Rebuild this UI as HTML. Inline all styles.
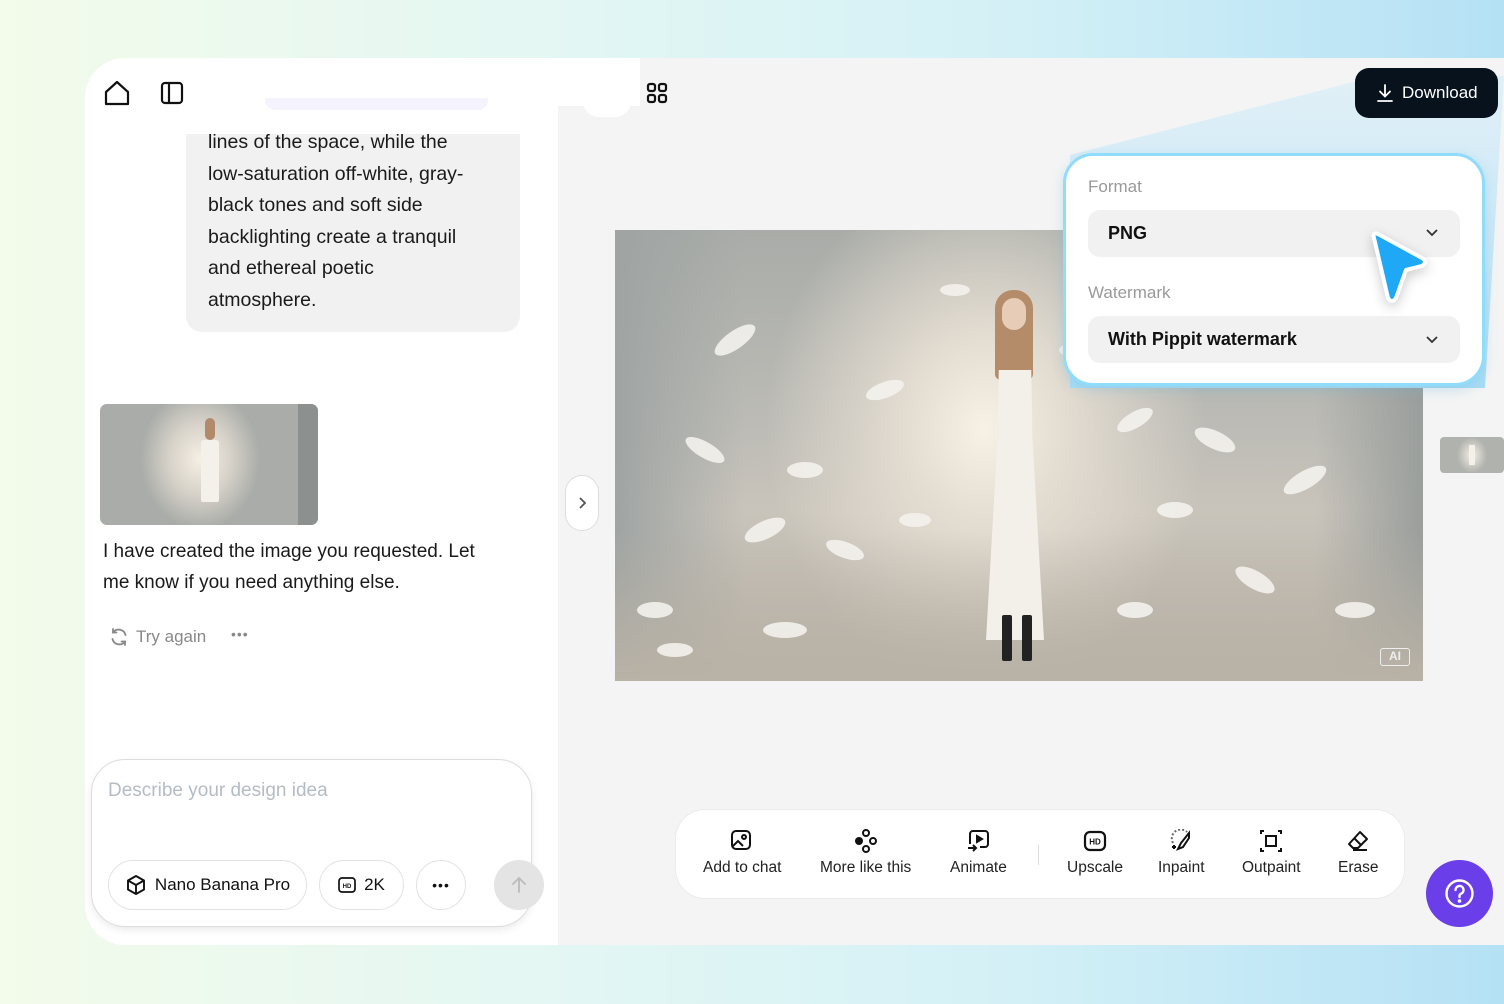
<!DOCTYPE html>
<html><head><meta charset="utf-8"><style>
*{box-sizing:border-box;margin:0;padding:0}
body{width:1504px;height:1004px;overflow:hidden;font-family:"Liberation Sans",sans-serif;position:relative;
background:linear-gradient(90deg,#f3fbea 0%,#e4f7f3 35%,#d5f1f6 65%,#b5e1f5 100%);}
.abs{position:absolute}
.left{left:85px;top:58px;width:473px;height:887px;background:#fff;border-radius:40px 0 0 40px}
.right{left:558px;top:58px;width:946px;height:887px;background:#f4f4f4}
.bubble{left:186px;top:127px;width:334px;height:205px;background:#f1f1f1;border-radius:0 0 16px 16px;padding:0 40px 0 22px;font-size:19.5px;line-height:31.6px;color:#1a1a1a}
.photo{left:615px;top:230px;width:808px;height:451px;overflow:hidden;
background:radial-gradient(ellipse 220px 260px at 370px 200px,#f7f1e6 0%,#e4ddd2 35%,rgba(200,196,188,0) 100%),
linear-gradient(180deg,#a9aca8 0%,#bdbcb6 45%,#c9c4bb 62%,#b9b4ab 100%);}
.tb{left:675px;top:809px;width:730px;height:90px;background:#fff;border-radius:30px;border:1px solid #ebebeb}
.tool{position:absolute;top:20px;text-align:center;font-size:15.5px;color:#222}
.tool svg{display:block;margin:0 auto 6px}
.pill{position:absolute;top:860px;height:50px;border:1px solid #e2e2e2;border-radius:25px;background:#fff;display:flex;align-items:center;justify-content:center;font-size:17px;color:#111}
</style></head><body>
<div class="abs left"></div>
<div class="abs right"></div>
<div class="abs" style="left:558px;top:58px;width:82px;height:48px;background:#fff"></div>
<div class="abs" style="left:583px;top:90px;width:48px;height:27px;background:#fff;border-radius:0 0 16px 16px"></div>
<div class="abs" style="left:265px;top:98px;width:223px;height:12px;background:#f5f3fe;border-radius:0 0 10px 10px"></div>
<svg class="abs" style="left:103px;top:79px" width="28" height="28" viewBox="0 0 28 28" fill="none" stroke="#111" stroke-width="2.2" stroke-linejoin="round"><path d="M3 13L14 3l11 10v12H3z"/></svg>
<svg class="abs" style="left:160px;top:81px" width="24" height="24" viewBox="0 0 24 24" fill="none" stroke="#111" stroke-width="2.2"><rect x="2" y="2" width="20" height="20" rx="3"/><line x1="9" y1="2" x2="9" y2="22"/></svg>
<svg class="abs" style="left:646px;top:82px" width="22" height="22" viewBox="0 0 22 22" fill="none" stroke="#111" stroke-width="2.2"><rect x="2" y="2" width="7" height="7" rx="2"/><rect x="13" y="2" width="7" height="7" rx="2"/><rect x="2" y="13" width="7" height="7" rx="2"/><rect x="13" y="13" width="7" height="7" rx="2"/></svg>
<div class="abs bubble">lines of the space, while the low-saturation off-white, gray-black tones and soft side backlighting create a tranquil and ethereal poetic atmosphere.</div>
<div class="abs" style="left:186px;top:127px;width:334px;height:7px;background:#fff"></div>
<div class="abs" style="left:100px;top:404px;width:218px;height:121px;border-radius:7px;overflow:hidden;background:radial-gradient(ellipse 60px 70px at 100px 55px,#f5efe4,#d8d3ca 50%,#a9aca8 100%)">
<div class="abs" style="left:101px;top:36px;width:18px;height:62px;background:#f4f1ea;border-radius:3px 3px 2px 2px"></div>
<div class="abs" style="left:105px;top:14px;width:10px;height:22px;background:#b08a6a;border-radius:5px"></div>
<div class="abs" style="left:198px;top:0;width:20px;height:121px;background:#8c908f"></div>
</div>
<div class="abs" style="left:103px;top:537px;font-size:19px;line-height:30.5px;color:#1a1a1a;width:400px">I have created the image you requested. Let me know if you need anything else.</div>
<svg class="abs" style="left:109px;top:627px" width="20" height="20" viewBox="0 0 20 20" fill="none" stroke="#888" stroke-width="1.8" stroke-linecap="round"><path d="M16.5 8A7 7 0 0 0 4 5.5M3.5 12A7 7 0 0 0 16 14.5"/><path d="M4 2v3.5h3.5M16 18v-3.5h-3.5"/></svg>
<div class="abs" style="left:136px;top:627px;font-size:17px;color:#888">Try again</div>
<div class="abs" style="left:231px;top:626px;font-size:14px;color:#888;letter-spacing:1px">•••</div>
<div class="abs" style="left:91px;top:759px;width:441px;height:168px;border:1px solid #ddd;border-radius:34px;background:#fff;box-shadow:0 3px 8px rgba(0,0,0,.08)"></div>
<div class="abs" style="left:108px;top:780px;font-size:19px;color:#b5bcc6">Describe your design idea</div>
<div class="pill" style="left:108px;width:199px"><svg width="22" height="22" viewBox="0 0 22 22" fill="none" stroke="#111" stroke-width="1.9" stroke-linejoin="round" style="margin-right:8px"><path d="M11 2l8 4.5v9L11 20l-8-4.5v-9z"/><path d="M3 6.5l8 4.5 8-4.5M11 11v9"/></svg>Nano Banana Pro</div>
<div class="pill" style="left:319px;width:85px"><svg width="18" height="16" viewBox="0 0 18 16" fill="none" stroke="#111" stroke-width="1.7" style="margin-right:8px"><rect x="1" y="1" width="16" height="14" rx="3"/><text x="9" y="11" font-size="6" text-anchor="middle" fill="#111" stroke="none" font-family="Liberation Sans" font-weight="bold">HD</text></svg>2K</div>
<div class="pill" style="left:416px;width:50px;font-size:14px;letter-spacing:1px">•••</div>
<div class="abs" style="left:494px;top:860px;width:50px;height:50px;border-radius:25px;background:#e4e4e4"></div>
<svg class="abs" style="left:509px;top:875px" width="20" height="20" viewBox="0 0 20 20" fill="none" stroke="#bbb" stroke-width="1.8" stroke-linecap="round"><path d="M10 17V3M4 9l6-6 6 6"/></svg>
<div class="abs" style="left:565px;top:475px;width:34px;height:56px;border:1px solid #ddd;border-radius:17px;background:#fff"></div>
<svg class="abs" style="left:576px;top:496px" width="12" height="14" viewBox="0 0 12 14" fill="none" stroke="#555" stroke-width="1.8"><path d="M4 2l5 5-5 5"/></svg>
<div class="abs photo">
<div class="abs" style="left:0;top:0;width:130px;height:451px;background:linear-gradient(90deg,#9fa4a3,rgba(170,172,168,0))"></div>
<div class="abs" style="left:700px;top:0;width:108px;height:451px;background:linear-gradient(90deg,rgba(150,154,152,0),#9a9e9c)"></div>
<div class="abs" style="left:0;top:300px;width:808px;height:151px;background:linear-gradient(180deg,rgba(200,195,186,0),#b9b2a6)"></div>
<div class="abs" style="left:380px;top:60px;width:38px;height:90px;background:#b58c6a;border-radius:18px 18px 6px 6px"></div>
<div class="abs" style="left:387px;top:68px;width:24px;height:32px;background:#e7cdb8;border-radius:12px"></div>
<div class="abs" style="left:371px;top:140px;width:58px;height:270px;background:#f3f0ea;clip-path:polygon(22% 0,78% 0,80% 25%,100% 100%,0 100%,20% 25%)"></div>
<div class="abs" style="left:387px;top:385px;width:10px;height:46px;background:#222;border-radius:2px"></div>
<div class="abs" style="left:407px;top:385px;width:10px;height:46px;background:#222;border-radius:2px"></div>
<svg class="abs" style="left:0;top:0" width="808" height="451"><g fill="#f4f2ee" opacity=".9">
<ellipse cx="120" cy="110" rx="24" ry="9" transform="rotate(-35 120 110)"/><ellipse cx="270" cy="160" rx="20" ry="8" transform="rotate(-20 270 160)"/><ellipse cx="90" cy="220" rx="22" ry="8" transform="rotate(30 90 220)"/><ellipse cx="190" cy="240" rx="18" ry="8"/><ellipse cx="150" cy="300" rx="22" ry="9" transform="rotate(-25 150 300)"/><ellipse cx="230" cy="320" rx="20" ry="8" transform="rotate(20 230 320)"/><ellipse cx="40" cy="380" rx="18" ry="8"/><ellipse cx="170" cy="400" rx="22" ry="8"/><ellipse cx="300" cy="290" rx="16" ry="7"/><ellipse cx="520" cy="190" rx="20" ry="8" transform="rotate(-30 520 190)"/><ellipse cx="600" cy="210" rx="22" ry="9" transform="rotate(25 600 210)"/><ellipse cx="690" cy="250" rx="24" ry="9" transform="rotate(-30 690 250)"/><ellipse cx="560" cy="280" rx="18" ry="8"/><ellipse cx="640" cy="350" rx="22" ry="9" transform="rotate(30 640 350)"/><ellipse cx="520" cy="380" rx="18" ry="8"/><ellipse cx="740" cy="380" rx="20" ry="8"/><ellipse cx="60" cy="420" rx="18" ry="7"/><ellipse cx="460" cy="120" rx="16" ry="7"/><ellipse cx="340" cy="60" rx="15" ry="6"/></g></svg>
<div class="abs" style="left:765px;top:418px;width:30px;height:18px;border:1.5px solid #eee;border-radius:3px;color:#eee;font-size:12px;font-weight:bold;text-align:center;line-height:15px">AI</div>
</div>
<div class="abs" style="left:1440px;top:437px;width:64px;height:36px;border-radius:4px;background:radial-gradient(ellipse 15px 18px at 32px 18px,#f5efe4,#b0b2ae)"><div class="abs" style="left:29px;top:8px;width:6px;height:20px;background:#f4f1ea"></div></div>
<svg class="abs" style="left:1070px;top:58px" width="434" height="330"><defs><linearGradient id="g" x1="0" y1="1" x2="0" y2="0"><stop offset="0" stop-color="#a9dcf5"/><stop offset="1" stop-color="#d6edf8" stop-opacity=".6"/></linearGradient></defs><polygon points="0,97 330,12 434,18 415,330 0,330" fill="url(#g)"/></svg>
<div class="abs" style="left:1355px;top:68px;width:143px;height:50px;background:#07121c;border-radius:14px;color:#fff;font-size:17px;display:flex;align-items:center;padding-left:20px">
<svg width="20" height="20" viewBox="0 0 20 20" fill="none" stroke="#fff" stroke-width="1.8" stroke-linecap="round" style="margin-right:7px"><path d="M10 2v11M5 8.5l5 5 5-5M3 18h14"/></svg>Download</div>
<div class="abs" style="left:1063px;top:153px;width:422px;height:233px;background:#fff;border:3px solid #8fdcfb;border-radius:30px;box-shadow:0 4px 12px rgba(100,180,220,.3)"></div>
<div class="abs" style="left:1088px;top:177px;font-size:17px;color:#999">Format</div>
<div class="abs" style="left:1088px;top:210px;width:372px;height:47px;background:#f1f1f1;border-radius:12px;font-size:18px;font-weight:bold;color:#111;padding:13px 0 0 20px">PNG</div>
<div class="abs" style="left:1088px;top:283px;font-size:17px;color:#999">Watermark</div>
<div class="abs" style="left:1088px;top:316px;width:372px;height:47px;background:#f1f1f1;border-radius:12px;font-size:18px;font-weight:bold;color:#111;padding:13px 0 0 20px">With Pippit watermark</div>
<svg class="abs" style="left:1424px;top:227px" width="16" height="12" viewBox="0 0 16 12" fill="none" stroke="#333" stroke-width="1.8"><path d="M3 3l5 5 5-5"/></svg>
<svg class="abs" style="left:1424px;top:334px" width="16" height="12" viewBox="0 0 16 12" fill="none" stroke="#333" stroke-width="1.8"><path d="M3 3l5 5 5-5"/></svg>
<svg class="abs" style="left:1362px;top:228px;filter:drop-shadow(0 4px 6px rgba(0,0,0,.2))" width="72" height="80" viewBox="0 0 72 80"><path d="M12 10Q10 4 16 6L60 30Q66 34 60 38L44 42L34 70Q30 76 26 70z" fill="#1fa8f5" stroke="#fff" stroke-width="4" stroke-linejoin="round"/></svg>
<div class="abs tb"></div>
<div class="abs" style="left:1038px;top:845px;width:1px;height:20px;background:#ddd"></div>
<div class="tool" style="left:703px;top:829px"><svg width="24" height="24" viewBox="0 0 24 24" fill="none" stroke="#111" stroke-width="2"><rect x="2" y="2" width="18" height="18" rx="4"/><circle cx="14" cy="8" r="2"/><path d="M3 17l5-5 5 5"/></svg>Add to chat</div>
<div class="tool" style="left:820px;top:829px"><svg width="24" height="24" viewBox="0 0 24 24" fill="none" stroke="#111" stroke-width="2"><circle cx="12" cy="4" r="3"/><circle cx="5" cy="12" r="3" fill="#111"/><circle cx="19" cy="12" r="3"/><circle cx="12" cy="20" r="3"/></svg>More like this</div>
<div class="tool" style="left:950px;top:829px"><svg width="24" height="24" viewBox="0 0 24 24" fill="none" stroke="#111" stroke-width="2"><path d="M4 15V5a3 3 0 0 1 3-3h12a3 3 0 0 1 3 3v10a3 3 0 0 1-3 3h-5"/><path d="M11 7v6l5-3z" fill="#111"/><path d="M2 19h7M7 16l3 3-3 3"/></svg>Animate</div>
<div class="tool" style="left:1067px;top:829px"><svg width="24" height="24" viewBox="0 0 24 24" fill="none" stroke="#111" stroke-width="2.2"><rect x="2" y="3" width="20" height="18" rx="5"/><text x="12" y="15.5" font-size="8" text-anchor="middle" fill="#111" stroke="none" font-weight="bold" font-family="Liberation Sans">HD</text></svg>Upscale</div>
<div class="tool" style="left:1158px;top:829px"><svg width="24" height="24" viewBox="0 0 24 24" fill="none" stroke="#111" stroke-width="2"><path d="M4 14A9 9 0 0 1 18 3" stroke-dasharray="2 2" stroke="#666"/><path d="M20 4l-8 10-3 6 5-2 6-9z"/><path d="M3 18h4M5 16v4"/></svg>Inpaint</div>
<div class="tool" style="left:1242px;top:829px"><svg width="24" height="24" viewBox="0 0 24 24" fill="none" stroke="#111" stroke-width="2"><rect x="7" y="7" width="10" height="10"/><path d="M2 5V2h3M19 2h3v3M22 19v3h-3M5 22H2v-3"/></svg>Outpaint</div>
<div class="tool" style="left:1338px;top:829px"><svg width="24" height="24" viewBox="0 0 24 24" fill="none" stroke="#111" stroke-width="2" stroke-linejoin="round"><path d="M14 3l7 7-9 9H7l-4-4z"/><path d="M8 9l7 7M7 21h14"/></svg>Erase</div>
<div class="abs" style="left:1426px;top:860px;width:67px;height:67px;border-radius:50%;background:#6a3ee8"></div>
<svg class="abs" style="left:1444px;top:878px" width="31" height="31" viewBox="0 0 31 31" fill="none" stroke="#fff" stroke-width="2.4" stroke-linecap="round"><circle cx="15.5" cy="15.5" r="13"/><path d="M11.5 12a4 4 0 1 1 5.5 3.7c-1 .5-1.5 1.2-1.5 2.3v1"/><circle cx="15.5" cy="23" r=".6" fill="#fff"/></svg>
</body></html>
